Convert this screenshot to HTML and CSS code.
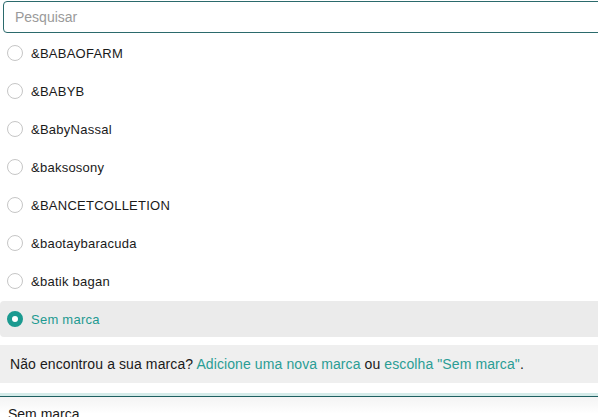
FILE: index.html
```html
<!DOCTYPE html>
<html lang="pt">
<head>
<meta charset="utf-8">
<link rel="stylesheet" href="styles.css">
</head>
<body>
<div class="panel">
  <div class="search">
    <input class="search-input" type="text" placeholder="Pesquisar">
  </div>
  <ul class="list">
    <li class="item"><span class="radio"></span><span class="label">&amp;BABAOFARM</span></li>
    <li class="item"><span class="radio"></span><span class="label">&amp;BABYB</span></li>
    <li class="item"><span class="radio"></span><span class="label">&amp;BabyNassal</span></li>
    <li class="item"><span class="radio"></span><span class="label">&amp;baksosony</span></li>
    <li class="item"><span class="radio"></span><span class="label">&amp;BANCETCOLLETION</span></li>
    <li class="item"><span class="radio"></span><span class="label">&amp;baotaybaracuda</span></li>
    <li class="item"><span class="radio"></span><span class="label">&amp;batik bagan</span></li>
    <li class="item selected"><span class="radio checked"></span><span class="label">Sem marca</span></li>
  </ul>
  <div class="notice">
    <span>Não encontrou a sua marca? <a class="link" href="#">Adicione uma nova marca</a> ou <a class="link" href="#">escolha "Sem marca"</a>.</span>
  </div>
  <div class="field">
    <div class="field-value">Sem marca</div>
  </div>
</div>
</body>
</html>
```
FILE: styles.css
```css
html, body {
  margin: 0;
  padding: 0;
  background: #ffffff;
  overflow: hidden;
}
body {
  font-family: "Liberation Sans", Arial, sans-serif;
  font-size: 13px;
  color: #1a1a1a;
}
.panel {
  width: 598px;
  display: flex;
  flex-direction: column;
}
.search {
  padding: 1px 0 0 3px;
}
.search-input {
  box-sizing: border-box;
  width: 610px;
  height: 32px;
  border: 1px solid #2b6a6c;
  border-radius: 4px;
  padding: 0 11px;
  font-family: "Liberation Sans", Arial, sans-serif;
  font-size: 14px;
  color: #222;
  outline: none;
  background: #fff;
}
.search-input::placeholder {
  color: #9a9a9a;
}
.list {
  list-style: none;
  margin: 0;
  padding: 0;
  padding-top: 1px;
}
.item {
  height: 38px;
  display: flex;
  align-items: center;
  padding-left: 7px;
  gap: 8px;
}
.item.selected {
  background: #ebebeb;
  border-radius: 4px 0 0 4px;
  color: #1d9a91;
  margin-top: 1px;
  height: 36px;
}
.radio {
  box-sizing: border-box;
  width: 16px;
  height: 16px;
  border-radius: 50%;
  border: 1px solid #c6c6c6;
  background: #fff;
  flex: none;
}
.radio.checked {
  border: 5px solid #1b9a90;
  background: #fff;
}
.label {
  font-size: 13px;
  letter-spacing: 0.25px;
}
.notice {
  margin-top: 8px;
  height: 38px;
  background: #efefef;
  display: flex;
  align-items: center;
  padding-left: 10px;
  font-size: 14px;
  color: #1a1a1a;
  white-space: nowrap;
  letter-spacing: 0.1px;
}
.link {
  color: #2a9d95;
  text-decoration: none;
}
.field {
  margin-top: 10px;
  border-top: 3px solid #d4ebe9;
  box-shadow: inset 0 1px 0 #1f5f61;
  background: linear-gradient(#f3f3f3, #ffffff 18px);
  height: 40px;
}
.field-value {
  padding: 10px 0 0 8px;
  font-size: 14px;
  color: #1a1a1a;
}
```
